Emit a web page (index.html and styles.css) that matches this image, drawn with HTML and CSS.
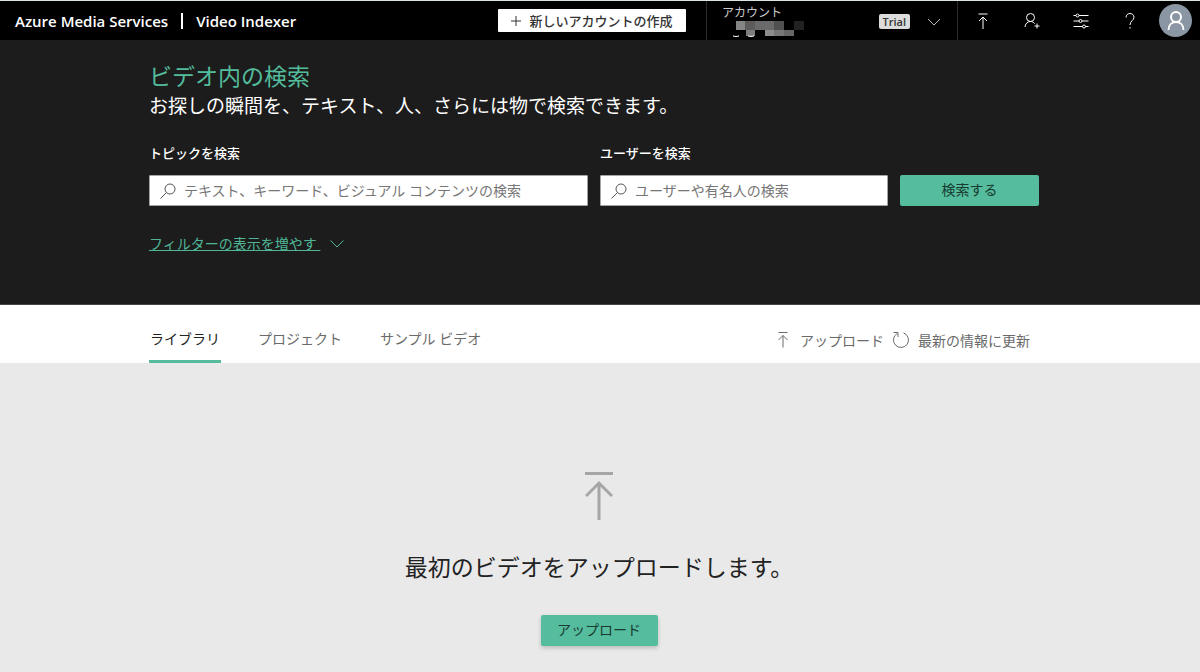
FILE: index.html
```html
<!DOCTYPE html>
<html lang="ja">
<head>
  <meta charset="UTF-8">
  <meta name="viewport" content="width=device-width, initial-scale=1">
  <title>Video Indexer</title>
  <link rel="stylesheet" href="styles.css">
</head>
<body>
  <header class="topbar">
    <div class="brand">
      <a href="#">Azure Media Services</a>
      <span class="brand-divider"></span>
      <a href="#">Video Indexer</a>
    </div>
    <button type="button" class="new-account">
      <svg width="10" height="10" viewBox="0 0 10 10"><path d="M5 0v10M0 5h10"/></svg>
      新しいアカウントの作成
    </button>
    <button type="button" class="account">
      <span class="account-info">
        <span class="account-label">アカウント</span>
        <!-- account name is masked -->
        <svg class="account-name" width="84" height="18" viewBox="0 0 84 18">
          <path fill="#858585" d="M14 1h9v9h-9z"/>
          <path fill="#5c5c5c" d="M23 1h10v9H23z"/>
          <path fill="#6a6a6a" d="M33 1h19v9H33z"/>
          <path fill="#505050" d="M52 1h10v9H52z"/>
          <path fill="#222" d="M72 1h10v9H72z"/>
          <path fill="#7d7d7d" d="M24 10h9v6h-9z"/>
          <path fill="#8c8c8c" d="M43 10h9v6h-9z"/>
          <path fill="#777" d="M52 10h10v6H52z"/>
          <path fill="#666" d="M62 10h10v6H62z"/>
          <path fill="none" stroke="#fff" d="M11 16q3 1 6 0M26 16q3 1 6 0"/>
        </svg>
      </span>
      <span class="badge">Trial</span>
      <svg class="chevron" width="14" height="8" viewBox="0 0 14 8"><path d="M1 1l6 6 6-6"/></svg>
    </button>
    <nav class="tools">
      <button type="button" aria-label="アップロード">
        <svg width="16" height="18" viewBox="0 0 16 18"><path d="M3.5 2h9M8 17V5M4 9l4-4 4 4"/></svg>
      </button>
      <button type="button" aria-label="ユーザーの招待">
        <svg width="18" height="18" viewBox="0 0 18 18"><circle cx="7.500" cy="5.500" r="4"/><path d="M2 15c.3-3.200 2.500-5.500 5.500-5.500 1.800 0 3.200.8 4.200 2.200M14 11.500v5M11.500 14h5"/></svg>
      </button>
      <button type="button" aria-label="設定">
        <svg width="16" height="18" viewBox="0 0 16 18"><path d="M.5 3.500h2.500M6 3.500h9.500M.5 9H6M9 9h6.500M.5 14.500h9M12.500 14.500h3"/><circle cx="4.500" cy="3.500" r="1.500"/><circle cx="7.500" cy="9" r="1.500"/><circle cx="11" cy="14.500" r="1.500"/></svg>
      </button>
      <button type="button" aria-label="ヘルプ">
        <svg width="14" height="18" viewBox="0 0 14 18"><path d="M3 5.500C3 3 4.700 1.500 7 1.500s4 1.500 4 3.700C11 8.500 7 8.800 7 13M7 15v1.500"/></svg>
      </button>
    </nav>
    <button type="button" class="avatar" aria-label="プロフィール">
      <svg width="20" height="22" viewBox="0 0 20 22"><circle cx="10" cy="7" r="5"/><path d="M2.500 20c0-5 3.300-8 7.500-8s7.500 3 7.500 8"/></svg>
    </button>
  </header>

  <section class="search">
    <div class="container">
      <h1>ビデオ内の検索</h1>
      <p class="lead">お探しの瞬間を、テキスト、人、さらには物で検索できます。</p>
      <form class="search-form">
        <div class="field field-topic">
          <label for="topic">トピックを検索</label>
          <div class="input-box">
            <svg width="16" height="16" viewBox="0 0 16 16"><circle cx="10" cy="6" r="5"/><path d="M6.500 9.500L.5 15.500"/></svg>
            <input type="text" id="topic" placeholder="テキスト、キーワード、ビジュアル コンテンツの検索">
          </div>
        </div>
        <div class="field field-people">
          <label for="people">ユーザーを検索</label>
          <div class="input-box">
            <svg width="16" height="16" viewBox="0 0 16 16"><circle cx="10" cy="6" r="5"/><path d="M6.500 9.500L.5 15.500"/></svg>
            <input type="text" id="people" placeholder="ユーザーや有名人の検索">
          </div>
        </div>
        <button type="submit" class="btn">検索する</button>
      </form>
      <a href="#" class="more-filters">
        <span>フィルターの表示を増やす&nbsp;</span>
        <svg width="14" height="8" viewBox="0 0 14 8"><path d="M.5.5L7 7 13.500.5"/></svg>
      </a>
    </div>
  </section>

  <div class="tabbar">
    <div class="container tabbar-inner">
      <nav class="tabs">
        <a href="#" class="active">ライブラリ</a>
        <a href="#">プロジェクト</a>
        <a href="#">サンプル ビデオ</a>
      </nav>
      <div class="actions">
        <button type="button">
          <svg width="18" height="18" viewBox="0 0 18 18"><path d="M4.500 1.500h9M9 16.500V4.500M4.500 9L9 4.500 13.500 9"/></svg>
          アップロード
        </button>
        <button type="button">
          <svg width="18" height="18" viewBox="0 0 18 18"><path d="M11.500 1.900A7.500 7.500 0 1 1 5 2.600M1.500 1.500H6V6"/></svg>
          最新の情報に更新
        </button>
      </div>
    </div>
  </div>

  <main class="library">
    <svg class="upload-icon" width="28" height="48" viewBox="0 0 28 48"><path d="M0 1.500h28M14 48V11M1 24L14 11l13 13"/></svg>
    <h2>最初のビデオをアップロードします。</h2>
    <button type="button" class="btn btn-upload">アップロード</button>
  </main>
</body>
</html>
```

FILE: styles.css
```css
/* Reset & basic styling */
* { box-sizing: border-box; }
body {
  margin: 0;
  min-height: 100vh;
  display: flex;
  flex-direction: column;
  font-family: "Noto Sans", "Noto Sans CJK JP", sans-serif;
  font-size: 14px;
  color: #222;
  background: #e9e9e9;
}
button, input {
  font: inherit;
  color: inherit;
}
button {
  padding: 0;
  border: none;
  background: none;
  cursor: pointer;
}
a {
  color: inherit;
  text-decoration: none;
}
svg {
  flex: none;
  fill: none;
  stroke: currentColor;
}
.container {
  width: 100%;
  max-width: 890px;
  margin: 0 auto;
}

/* Top bar */
.topbar {
  display: flex;
  align-items: center;
  height: 40px;
  padding: 0 8px 0 15px;
  border-top: 1px solid #dde5e2;
  background: #000;
  color: #fff;
}
.brand {
  display: flex;
  align-items: center;
  gap: 13px;
  margin-right: auto;
  font-family: "Open Sans", sans-serif;
  font-size: 15px;
  font-weight: 600;
}
.brand-divider {
  width: 2px;
  height: 16px;
  background: #fff;
}
.new-account {
  display: flex;
  align-items: center;
  justify-content: center;
  gap: 8px;
  width: 188px;
  height: 23px;
  margin-right: 20px;
  border-radius: 1px;
  background: #fff;
  color: #333;
  font-size: 13px;
  font-weight: 500;
}
.account {
  display: flex;
  align-items: center;
  width: 252px;
  height: 100%;
  padding: 2px 16px 0 15px;
  border: solid #2b2b2b;
  border-width: 0 1px;
  text-align: left;
}
.account-info {
  display: flex;
  flex-direction: column;
  margin-right: auto;
}
.account-label {
  font-size: 12px;
  line-height: 15px;
  color: #ccc;
}
.account-name { stroke: none; }
.badge {
  padding: 0 4px;
  border-radius: 2px;
  background: #dcdcdc;
  color: #333;
  font-family: "Open Sans", sans-serif;
  font-size: 11px;
  font-weight: 600;
  line-height: 15px;
}
.chevron {
  margin-left: 17px;
  color: #bbb;
}
.tools {
  display: flex;
  margin-right: 5px;
}
.tools button {
  display: flex;
  align-items: center;
  justify-content: center;
  width: 49px;
  height: 38px;
}
.avatar {
  display: flex;
  align-items: center;
  justify-content: center;
  width: 33px;
  height: 33px;
  border-radius: 50%;
  background: #8a96a3;
  stroke-width: 2;
}

/* Search area */
.search {
  padding: 20px 12px 48px 0;
  background: #1c1c1c;
  color: #fff;
}
h1, h2 {
  margin: 0;
  font-size: 23px;
  font-weight: 400;
}
h1 {
  line-height: 32px;
  color: #53bc9c;
}
.lead {
  margin: 0;
  font-size: 19px;
  line-height: 28px;
}
.search-form {
  display: flex;
  align-items: flex-end;
  gap: 12px;
  margin-top: 23px;
}
.field {
  display: flex;
  flex-direction: column;
  gap: 12px;
}
.field-topic { flex: 439; }
.field-people { flex: 288; }
.field label {
  font-size: 13px;
  font-weight: 500;
  line-height: 20px;
}
.input-box {
  display: flex;
  align-items: center;
  gap: 8px;
  height: 31px;
  padding: 0 10px;
  border: 1px solid #a5a5a5;
  border-radius: 1px;
  background: #fff;
  color: #555;
}
.input-box input {
  flex: 1;
  min-width: 0;
  padding: 0;
  border: none;
  outline: none;
  background: none;
}
.input-box input::placeholder { color: #767676; }
.btn {
  flex: none;
  width: 139px;
  height: 31px;
  padding-bottom: 4px;
  border-radius: 2px;
  background: #55bc9e;
  color: #173b30;
}
.more-filters {
  display: inline-flex;
  align-items: center;
  gap: 10px;
  margin-top: 26px;
  line-height: 24px;
  color: #4fb596;
}
.more-filters span { text-decoration: underline; }

/* Tabs */
.tabbar {
  padding-right: 12px;
  border-top: 1px solid #444;
  background: #fff;
  color: #6a6a6a;
}
.tabbar-inner {
  display: flex;
  justify-content: space-between;
}
.tabs {
  display: flex;
  gap: 36px;
}
.tabs a {
  padding: 22px 1px 10px;
  border-bottom: 3px solid transparent;
  line-height: 23px;
}
.tabs .active {
  border-color: #55bc9e;
  color: #222;
}
.actions {
  display: flex;
  align-items: center;
  gap: 8px;
  padding: 11px 9px 0 0;
}
.actions button {
  display: flex;
  align-items: center;
  gap: 8px;
}

/* Empty library */
.library {
  flex: 1;
  display: flex;
  flex-direction: column;
  align-items: center;
  padding: 109px 2px 24px 0;
}
.upload-icon {
  color: #a6a6a6;
  stroke-width: 3;
}
h2 {
  margin: 29px 0 30px;
  line-height: 36px;
}
.btn-upload {
  width: 117px;
  box-shadow: 0 2px 4px rgba(0, 0, 0, 0.2);
}
```
